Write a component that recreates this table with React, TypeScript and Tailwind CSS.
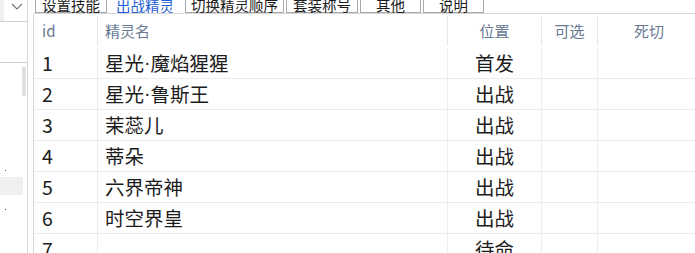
import React from "react";

const FONT = { fontFamily: '"Noto Sans CJK SC", "Noto Sans", sans-serif' };

const rows: [string, string, string][] = [
  ["1", "星光·魔焰猩猩", "首发"],
  ["2", "星光·鲁斯王", "出战"],
  ["3", "茉蕊儿", "出战"],
  ["4", "蒂朵", "出战"],
  ["5", "六界帝神", "出战"],
  ["6", "时空界皇", "出战"],
  ["7", "", "待命"],
];

function Name({ text }: { text: string }) {
  const parts = text.split("·");
  if (parts.length === 1) return <>{text}</>;
  return (
    <>
      {parts[0]}
      <span className="font-['Liberation_Sans',sans-serif]">·</span>
      {parts[1]}
    </>
  );
}

function LeftPanel() {
  return (
    <div className="w-[28px] shrink-0 border-r border-[#d6d6d6] flex flex-col">
      <div className="h-[22px] shrink-0 border-b border-[#d0d0d0] flex">
        <div className="w-[4px] bg-[#efefef]" />
        <div className="flex-1 flex justify-center pt-[3px] pl-[2px]">
          <svg width="12" height="7" viewBox="0 0 12 7">
            <polyline points="1,1 6,6 11,1" fill="none" stroke="#777" strokeWidth="1.2" />
          </svg>
        </div>
      </div>
      <div className="h-[41px] shrink-0 border-b border-[#d0d0d0]" />
      <div className="flex-1 flex">
        <div className="flex-1 flex flex-col">
          <div className="h-[107px]" />
          <div className="h-[7px] pl-[5px]">
            <div className="w-[1px] h-[1px] bg-[#555]" />
          </div>
          <div className="h-[18px] bg-[#efefef] mr-[-1px]" />
          <div className="h-[14px]" />
          <div className="h-[4px] pl-[5px]">
            <div className="w-[1px] h-[1px] bg-[#555]" />
          </div>
        </div>
        <div className="w-[4px] mr-[1px] pt-[4px]">
          <div className="h-[29px] bg-[#e0e0e0]" />
        </div>
      </div>
    </div>
  );
}

function Tab({ label, w, ml, active }: { label: string; w: string; ml: string; active?: boolean }) {
  return (
    <div
      className={
        "h-[26px] shrink-0 flex items-end justify-center text-[14.5px] leading-[15px] " +
        w +
        " " +
        ml +
        (active
          ? " text-[#1f5fd6] bg-white"
          : " text-[#1b1b1b] bg-white border border-[#a9a9a9]")
      }
    >
      <span className="whitespace-nowrap">{label}</span>
    </div>
  );
}

export default function App() {
  return (
    <div className="w-[695px] h-[253px] overflow-hidden bg-white flex" style={FONT}>
      <LeftPanel />
      <div className="ml-[5px] flex-1 min-w-0 flex flex-col">
        <div className="h-[13px] shrink-0 overflow-hidden flex items-end">
          <Tab label="设置技能" w="w-[72px]" ml="ml-[2px]" />
          <Tab label="出战精灵" w="w-[74px]" ml="ml-[1px]" active />
          <Tab label="切换精灵顺序" w="w-[99px]" ml="ml-[3px]" />
          <Tab label="套装称号" w="w-[72px]" ml="ml-[2px]" />
          <Tab label="其他" w="w-[61px]" ml="ml-[2px]" />
          <Tab label="说明" w="w-[61px]" ml="ml-[2px]" />
        </div>
        <div className="flex-1 border-l border-t border-[#d6d6d6] overflow-hidden">
          <div className="w-[700px]">
            <div className="h-[34px] flex text-[15px] text-[#667892]">
              <div className="w-[64px] shrink-0 pl-[8px] flex items-center border-r border-[#e6e6e6] my-[2px]">id</div>
              <div className="w-[350px] shrink-0 pl-[7px] flex items-center border-r border-[#e6e6e6] my-[2px]">精灵名</div>
              <div className="w-[94px] shrink-0 flex items-center justify-center border-r border-[#e6e6e6] my-[2px]">位置</div>
              <div className="w-[56px] shrink-0 flex items-center justify-center border-r border-[#e6e6e6] my-[2px]">可选</div>
              <div className="w-[102px] shrink-0 flex items-center justify-center my-[2px]">死切</div>
            </div>
            {rows.map((r) => (
              <div key={r[0]} className="h-[31px] flex border-b border-[#ececec] text-[19.5px] text-[#1c1c1c] leading-none">
                <div className="w-[64px] shrink-0 pl-[8px] flex items-center border-r border-[#ececec]">{r[0]}</div>
                <div className="w-[350px] shrink-0 pl-[7px] flex items-center border-r border-[#ececec] whitespace-nowrap">
                  <Name text={r[1]} />
                </div>
                <div className="w-[94px] shrink-0 flex items-center justify-center border-r border-[#ececec]">{r[2]}</div>
                <div className="w-[56px] shrink-0 border-r border-[#ececec]" />
                <div className="w-[102px] shrink-0" />
              </div>
            ))}
          </div>
        </div>
      </div>
    </div>
  );
}
